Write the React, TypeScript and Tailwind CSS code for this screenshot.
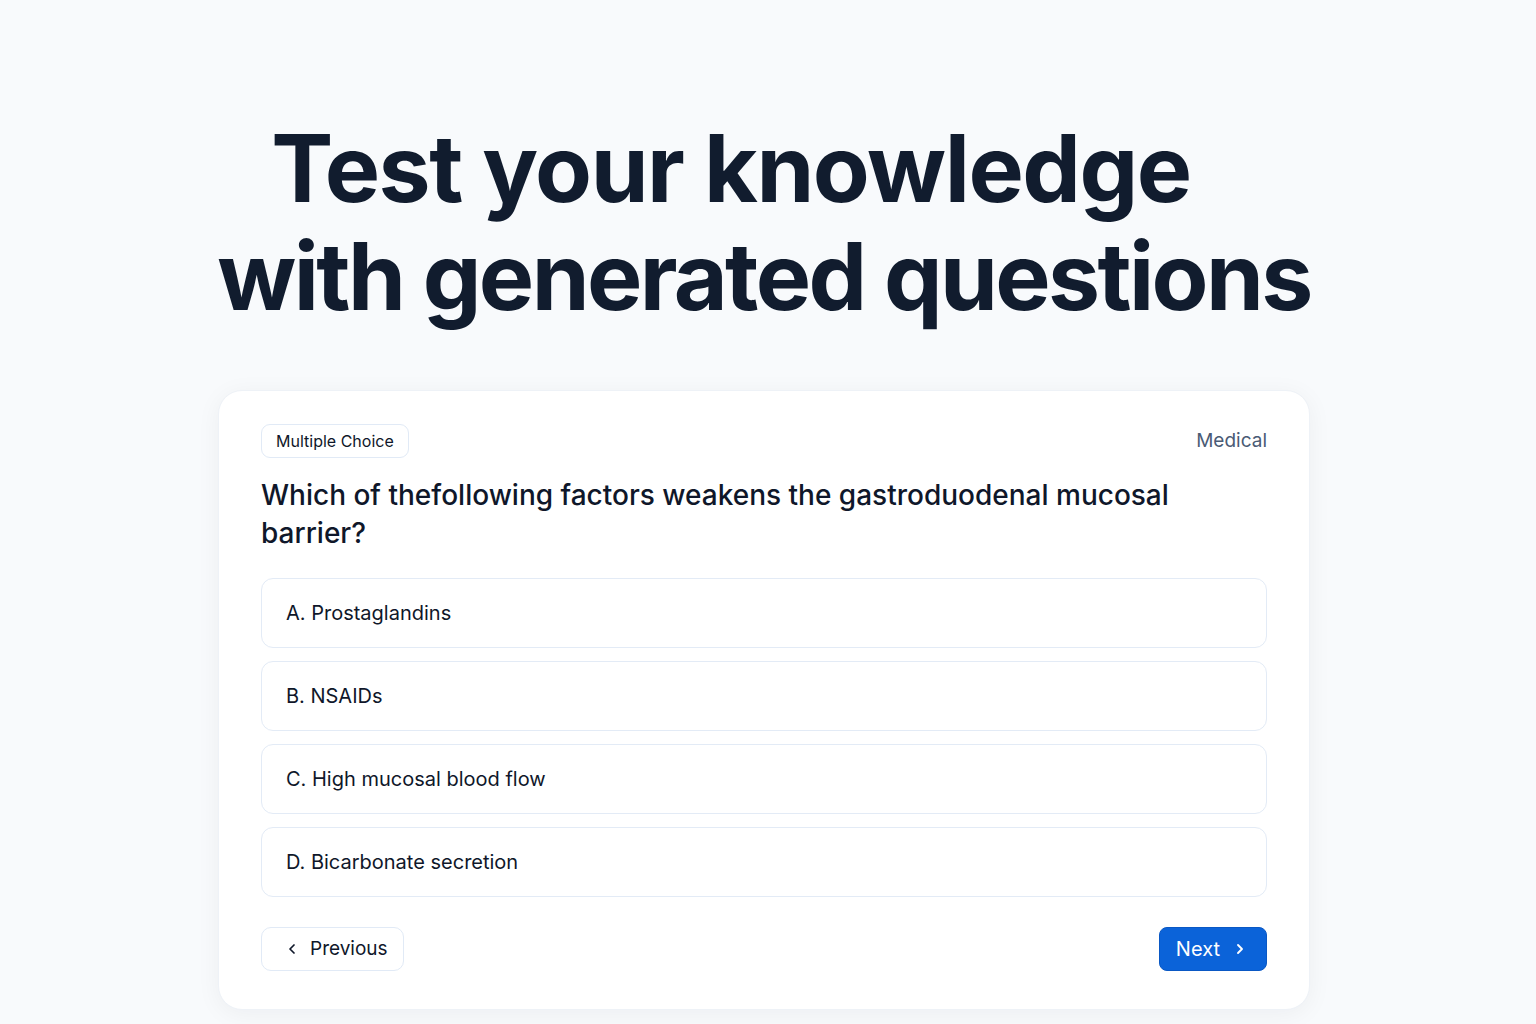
import { ChevronLeft, ChevronRight } from 'lucide-react';

const options = [
    'A. Prostaglandins',
    'B. NSAIDs',
    'C. High mucosal blood flow',
    'D. Bicarbonate secretion',
];

export default function App() {
    return (
        <div className="min-h-screen w-full bg-[#f8fafc] flex flex-col items-center pr-[8px] font-['Inter','Noto_Sans',sans-serif] text-[#0f172a]">
            <h1 className="mt-[114px] flex flex-col items-center text-[93px] font-bold leading-[108px] tracking-[-0.028em] text-[#111c2e]">
                <span className="pr-[66px] tracking-[-0.016em]">Test your knowledge</span>
                <span>with generated questions</span>
            </h1>

            <div className="mt-[60px] w-[1092px] rounded-[24px] bg-white border border-[#eef2f7] shadow-[0_4px_24px_rgba(15,23,42,0.05)] px-[42px] pt-[33px] pb-[38px]">
                <div className="flex items-center justify-between">
                    <span className="h-[34px] px-[14px] flex items-center rounded-[9px] border border-[#e1eaf6] text-[16px] text-[#0f172a]">
                        Multiple Choice
                    </span>
                    <span className="text-[19px] text-[#4a5b75]">Medical</span>
                </div>

                <p className="mt-[18px] text-[28px] font-medium leading-[38px] text-[#0f172a] pr-[80px]">
                    Which of thefollowing factors weakens the gastroduodenal mucosal barrier?
                </p>

                <div className="mt-[26px] flex flex-col gap-[13px]">
                    {options.map((o) => (
                        <div
                            key={o}
                            className="h-[70px] flex items-center px-[24px] rounded-[12px] border border-[#e3ebf6] text-[20px] text-[#0f172a]"
                        >
                            {o}
                        </div>
                    ))}
                </div>

                <div className="mt-[30px] flex items-center justify-between">
                    <button className="h-[44px] pl-[22px] pr-[15px] flex items-center gap-[10px] rounded-[10px] border border-[#e1eaf6] text-[19px] text-[#0f172a] bg-white">
                        <ChevronLeft size={16} strokeWidth={2.6} />
                        Previous
                    </button>
                    <button className="h-[44px] pl-[16px] pr-[18px] flex items-center gap-[12px] rounded-[8px] bg-[#0b63d9] border border-[#0a58c4] text-[20px] text-white">
                        Next
                        <ChevronRight size={16} strokeWidth={2.8} />
                    </button>
                </div>
            </div>
        </div>
    );
}
